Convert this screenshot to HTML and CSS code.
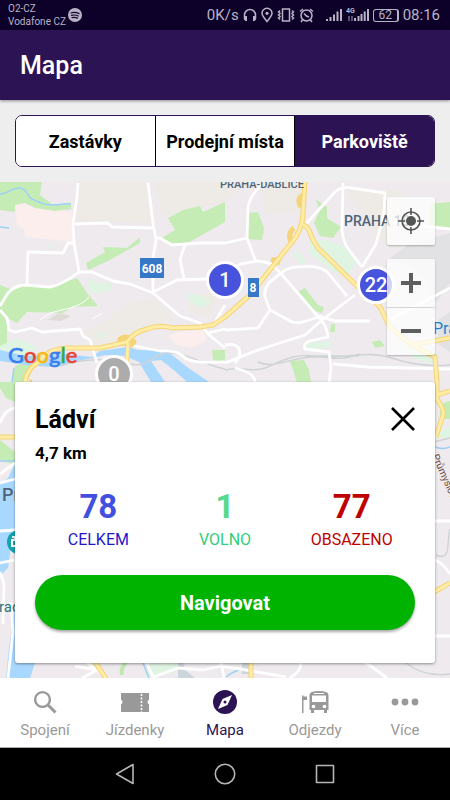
FILE: index.html
```html
<!DOCTYPE html>
<html lang="cs">

<head>
    <meta charset="UTF-8">
    <meta name="viewport" content="width=device-width, initial-scale=1.0">
    <title>Mapa</title>
    <link rel="stylesheet" href="styles.css">
</head>

<body>
    <div class="status">
        <div class="carrier">O2-CZ<br>Vodafone CZ</div>
        <svg class="spotify" width="14" height="14" viewBox="0 0 14 14">
            <circle cx="7" cy="7" r="7" fill="#b9b3c6" />
            <path d="M3 5q4-1.500 8 .6M3.500 7.400q3.500-1 6.700.6M4 9.600q3-.8 5.400.5" fill="none" stroke="#130531" stroke-width="1.200" stroke-linecap="round" />
        </svg>
        <div class="status-right">
            <span class="speed">0K/s</span>
            <svg width="14" height="16" viewBox="0 0 14 16">
                <path d="M1.500 12V8a5.500 5.500 0 0 1 11 0v4" class="line" />
                <path d="M1 9h3v5H2.500L1 12.500zM13 9h-3v5h1.500l1.500-1.500z" class="solid" />
            </svg>
            <svg width="12" height="16" viewBox="0 0 12 16">
                <path d="M6 14.500C3 11 1 8.800 1 6.300a5 5 0 0 1 10 0c0 2.500-2 4.700-5 8.200z" class="line" />
                <circle cx="6" cy="6.300" r="1.600" class="solid" />
            </svg>
            <svg width="18" height="16" viewBox="0 0 18 16">
                <path d="M5.500 2h7v12h-7zM3 3.500L1.500 5 3 6.500 1.500 8 3 9.500 1.500 11 3 12.500M15 3.500L16.500 5 15 6.500 16.500 8 15 9.500l1.500 1.500-1.500 1.500" class="line" />
            </svg>
            <svg width="15" height="16" viewBox="0 0 15 16">
                <circle cx="7.500" cy="8.500" r="5.500" class="line" />
                <path d="M1 4.500L4 2M14 4.500L11 2M3.500 13L2 15M11.500 13l1.500 2M5 6.500l2.500 2.500L10 10" class="line" />
            </svg>
            <svg class="signal" width="16" height="16" viewBox="0 0 16 16">
                <path d="M1 14v-2M4.500 14v-4M8 14V7.500M11.500 14V4.500M15 14V2" class="bar" />
            </svg>
            <svg width="23" height="16" viewBox="0 0 23 16">
                <text x="0" y="6" class="net">4G</text>
                <path d="M3 14V9M6 14V9" class="bar dim" />
                <path d="M9 14v-3M12.500 14V9M15.500 14V7M18.700 14V4.500M22 14V2" class="bar" />
            </svg>
            <span class="battery">62</span>
            <span class="clock">08:16</span>
        </div>
    </div>

    <header class="header">
        <h1>Mapa</h1>
    </header>

    <div class="filter">
        <div class="segments">
            <button type="button">Zastávky</button>
            <button type="button">Prodejní místa</button>
            <button type="button" class="selected">Parkoviště</button>
        </div>
    </div>

    <main class="map">
        <svg class="map-canvas" viewBox="0 182 450 496" preserveAspectRatio="xMidYMin slice">
            <rect x="-500" y="182" width="1500" height="1200" fill="#eeeaee" />

            <!-- built-up areas -->
            <path fill="#eeebe6" d="M78 182h68l5 42-38-2-38 0zM155 182h95l-25 20-22 6-20 2-20 8zM260 182h45l-5 30-35 2zM345 190h60l-8 60-20-10zM80 335l30-18 20-14 22-4 20 18-12 8-30 15-30 8zM188 300l22-9 8 8-10 18-20-6z" />
            <path fill="#e2e2e4" d="M390 258l18-13 42-12v50l-14 20-10-20-15-18zM438 320l12-8v40l-12-8z" />
            <path fill="#fdeeee" d="M15 205l10-2 10 5 37 4v30l-15-2-32-3-1-8-7-3zM168 336l10-4 25-2 4 10-15 8-15-3z" />
            <path fill="#dedbd7" d="M47 320l12-7 12 3-10 5zM193 304l7-7 4 1-6 8z" />

            <!-- parks -->
            <path fill="#c6ecb6" d="M0 182h42l-2 13 13 10 18-1v5l-16 2-20-3-10-5-10 2v7l-15-2zM168 218l15-8 17-4 3 6 22-10v20l-37 21h-21l-5-5 13-8zM86 263l19-11-2-5 24 1 13-11v6l-30 17-22 10zM0 285l13 5 12-4 25 1 27-9 10 15 11 13-26 1-9 6-36-1-10 11-10-5 0 25-7 4zM248 213l10-1 6 16-2 12-16-1zM315 199l12 8v11l14 9-8 11-13-2-6-13 6-13zM297 292l8-4 13 17 6 2-2 6-12-3zM430 204l20-2v26l-20-2zM372 342l8-2 5 6-10 2zM290 361l14-1 5 10 2 12h-14zM331 324h4v8h-5zM15 366l12-5 6 8-6 13H12zM212 350h13v13l-12-3zM0 382h15v20l-9-4-6-10zM0 440l15 12v13l-15-5zM0 516l3 10-3 8zM440 404l10-3v18h-10z" />
            <path fill="#e0f4e3" d="M310 238l20 3 20 8 8 10-10 16-14-3-24-18zM292 252l10 2 4 8-6 3zM187 294l16 2 8 6-8 6-14-6zM90 278l8 5 15 0-3 8-18 2-4-6zM302 344l30-3-2 6-22 5zM0 346l18-8 20 10-10 8-28-2zM400 342l35 8v14l-22-6zM145 676l6-14h30l-8 12zM436 432l14-5v10l-14 2zM97 333l6 0 2 5-8-1zM51 243l3-1-1 7h-3z" />

            <!-- water -->
            <path fill="#a9d8ff" d="M0 350l26 6 40-2 26 3 8-6 28-4 10 3 29 1 20 16 22 15h-22l-12-11-14-11-10 1 14 21h-14l-12-20-14-6-20-1-30 7-24 5-25-2-26-4zM15 464l-7 14-8 6v92l8-8 4-28 3-4zM15 608l-6 40-3 30h24l6-18H15z" />
            <g class="stream">
                <path d="M0 194c8 0 12-7 20-6s7 9 12 11 10 6 20 6 12-2 19-1" />
                <path d="M0 227l9 1M12 382l2-14M435 447q8 3 15 0M0 461h15M143 663l6 15M226 677q10-8 20-8" />
            </g>
            <path fill="#cbd5da" d="M178 662h5l2 8 10 8h-17zM242 662h8v12h-8z" />

            <!-- railways -->
            <g class="rail">
                <path d="M60 366c30-10 50-6 70-2s20-10 38-11 30 10 57 16M225 370c14-4 24 3 40-2 16-6 28-15 50-12s26 4 45-2M258 362c18 8 32-6 60-5s50-6 70 0 36 10 62 8M305 356h54" />
                <path d="M405 662c14 12 30 14 45 12M434 442l16-4M436 555c16 7 10-12 14-26" />
            </g>

            <!-- streets -->
            <g class="street">
                <path d="M78 183l-1 14-4 26 1 20 5 28M75 224l33-1 4 4 41 1M148 183l5 40 3 17-3 18v34M156 238h4l12 7 28-2h25l22-5M185 245l-5 14 4 20M27 285l1-33 35 1 5-10h5" />
                <path d="M0 306l8-13q7-8 17-8l25 2q12-2 29-15l13 0 21 9 17 3 23 9 27 23 20 7 8 11 17 14M153 292l24-12 31-1M225 305l-10 17M208 333l17-4" />
                <path d="M0 310l7 8 2 12 6 2 17-4 10 4 38-3 3 7 7 4 7 23M130 345l30 6q18-1 24 6 6 7 41 5" />
                <path d="M262 184q-14 14-14 25l-1 29 9 24M225 272l16-8 16-3q10 0 18 6l15 17 31 36q6 7 7 17l-18 4q-7 2-5 8l24 3 2 15-2 17" />
                <path d="M225 363l33-13 47-15 17-15 33-25M275 278q-12 8-10 19l5 13 22 12q8 2 20-3l10-3M275 278q12-12 24-11 22-3 30 7l18 22M270 310l-12 18-33 2M322 317l13 4h35" />
                <path d="M343 183l-1 47q1 12 7 20l13 17M303 227l32-35q7-6 17-4l33 5-1 20-8 31-14 23M385 222l65 7M391 319l59-31M225 345c16-3 18 8 10 18M235 368q20 5 20 14M333 364l35 3 82 2" />
                <path d="M0 423q5-14 15-15M0 474l15-11M0 483l15-4M0 531l15-1M0 563l15-3M0 572l4 12-1 40M8 678l5-46-2-30M435 521h15M435 560q8 3 15 14M435 636h15M75 666l22 4-15 8M86 662l16 12M147 663l6 14 25-9 25 2 18-4 25 4 40 7M221 662l3 16M301 662q0 11-12 16M365 662l22 16" />
            </g>
            <path class="park-path" d="M126 662q-6 8-4 13" />
            <path class="lane" d="M40 320l10-7 20-5q14-4 19-11M92 319l10-6" />

            <!-- main roads -->
            <g class="road-edge">
                <path d="M25 382q2-14 14-20 8-13 28-14l33 0 27-6q7-10 20-13 12-5 26-1l27-1 13-2 12-8 25-22 38-48q15-16 15-34l2-32M128 343l-1 17-5 22M29 382h3" />
                <path d="M303 225q5 0 9 13l6 10 40 39 22 20 10 20 22 18 23 12 2 25v17q8 12 6 16l-7 22M412 345l38-7M437 395l13-4M0 437h15M434 592l16-9M95 662l12 18M251 660v20" />
                <path d="M127 343q-8 1-7-4 8-5 14 3l-4 4M301 207q-5-8 2-12M291 242q-4-8 3-14M280 263q-11-4-4-3l4-2" />
            </g>
            <g class="road-fill">
                <path d="M25 382q2-14 14-20 8-13 28-14l33 0 27-6q7-10 20-13 12-5 26-1l27-1 13-2 12-8 25-22 38-48q15-16 15-34l2-32M128 343l-1 17-5 22" />
                <path d="M303 225q5 0 9 13l6 10 40 39 22 20 10 20 22 18 23 12 2 25v17q8 12 6 16l-7 22M412 345l38-7M437 395l13-4M0 437h15M434 592l16-9M95 662l12 18M251 660v20" />
            </g>

            <!-- place names and road numbers -->
            <g class="place">
                <text x="220" y="188" class="small">PRAHA-ĎÁBLICE</text>
                <text x="344" y="226">PRAHA 18</text>
                <text x="310" y="390" class="small">PRAHA 9</text>
                <text x="2" y="501" class="big">Praha</text>
            </g>
            <text x="433" y="334" class="sight">Pra</text>
            <text x="-1" y="612" class="castle">rad</text>
            <text x="432" y="456" class="street-name" transform="rotate(66 432 456)">Průmyslová</text>
            <circle cx="19" cy="542" r="12" fill="#12a4af" />
            <path d="M12 537h3v3h-3v6h3" stroke="#fff" stroke-width="2" fill="none" />
            <rect x="140" y="258" width="24" height="20" fill="#3777c8" />
            <text x="152" y="273" class="road-no">608</text>
            <rect x="248" y="278" width="11" height="19" fill="#3777c8" />
            <text x="253" y="292" class="road-no">8</text>
        </svg>

        <button type="button" class="pin pin-one">1</button>
        <button type="button" class="pin pin-many">22</button>
        <button type="button" class="pin pin-empty">0</button>
        <div class="google"><span class="b">G</span><span class="r">o</span><span class="y">o</span><span class="b">g</span><span class="g">l</span><span class="r">e</span></div>

        <div class="controls">
            <button type="button" class="control" aria-label="Moje poloha">
                <svg width="28" height="28" viewBox="0 0 28 28">
                    <circle cx="14" cy="14" r="9" fill="none" stroke="#555" stroke-width="1.600" />
                    <circle cx="14" cy="14" r="5" fill="#555" />
                    <path d="M14 1v7M14 20v7M1 14h7M20 14h7" stroke="#555" stroke-width="1.600" />
                </svg>
            </button>
            <div class="zoom">
                <button type="button" class="control" aria-label="Přiblížit">
                    <svg width="22" height="22" viewBox="0 0 22 22">
                        <path d="M11 1v20M1 11h20" stroke="#5e5e5e" stroke-width="4" />
                    </svg>
                </button>
                <button type="button" class="control" aria-label="Oddálit">
                    <svg width="22" height="22" viewBox="0 0 22 22">
                        <path d="M1 10h20" stroke="#5e5e5e" stroke-width="4" />
                    </svg>
                </button>
            </div>
        </div>

        <section class="card">
            <div class="card-head">
                <h2>Ládví</h2>
                <button type="button" class="close" aria-label="Zavřít">
                    <svg width="24" height="24" viewBox="0 0 24 24">
                        <path d="M1 1l22 22M23 1L1 23" stroke="#000" stroke-width="2.600" />
                    </svg>
                </button>
            </div>
            <p class="distance">4,7 km</p>
            <div class="stats">
                <div class="stat total"><strong>78</strong><span>CELKEM</span></div>
                <div class="stat free"><strong>1</strong><span>VOLNO</span></div>
                <div class="stat taken"><strong>77</strong><span>OBSAZENO</span></div>
            </div>
            <button type="button" class="navigate">Navigovat</button>
        </section>
    </main>

    <nav class="tabs">
        <a href="#">
            <svg width="28" height="24" viewBox="0 0 28 24">
                <circle cx="11.500" cy="9.500" r="7.400" fill="none" stroke="currentColor" stroke-width="2.400" />
                <path d="M17 15l7.500 7.500" stroke="currentColor" stroke-width="3" />
            </svg>
            Spojení
        </a>
        <a href="#">
            <svg width="28" height="24" viewBox="0 0 28 24">
                <path d="M0 3h28v6.500q-3 2.500 0 5V22H0v-7.500q3-2.500 0-5z" fill="currentColor" />
                <path d="M20.500 4v18" stroke="#fff" stroke-width="1.600" stroke-dasharray="2 1.500" />
            </svg>
            Jízdenky
        </a>
        <a href="#" class="active">
            <svg width="28" height="24" viewBox="0 0 28 24">
                <circle cx="14" cy="12" r="12" fill="currentColor" />
                <path d="M21 5l-4.500 10L7 19l4.500-10z" fill="#fff" />
                <circle cx="14" cy="12" r="1.500" fill="currentColor" />
            </svg>
            Mapa
        </a>
        <a href="#">
            <svg width="28" height="24" viewBox="0 0 28 24">
                <path d="M1 5.500h1.500V23H1zM2.500 6.500H6V10H2.500z" fill="currentColor" />
                <path d="M8.500 5q0-4 9.500-4t9.500 4v15h-1.500v3h-3v-3h-10v3h-3v-3H8.500z" fill="currentColor" />
                <path d="M11 5.500h14v6.500H11zM13 3h10v1H13z" fill="#fff" />
                <circle cx="12.500" cy="16.500" r="1.800" fill="#fff" />
                <circle cx="23.500" cy="16.500" r="1.800" fill="#fff" />
            </svg>
            Odjezdy
        </a>
        <a href="#">
            <svg width="28" height="24" viewBox="0 0 28 24">
                <g fill="currentColor">
                    <circle cx="4" cy="12" r="3.400" />
                    <circle cx="14" cy="12" r="3.400" />
                    <circle cx="24" cy="12" r="3.400" />
                </g>
            </svg>
            Více
        </a>
    </nav>

    <div class="system-nav">
        <button type="button" aria-label="Zpět">
            <svg width="22" height="22" viewBox="0 0 22 22">
                <path d="M19 1.500v19L2.500 11z" />
            </svg>
        </button>
        <button type="button" aria-label="Domů">
            <svg width="22" height="22" viewBox="0 0 22 22">
                <circle cx="11" cy="11" r="9.700" />
            </svg>
        </button>
        <button type="button" aria-label="Přehled">
            <svg width="22" height="22" viewBox="0 0 22 22">
                <path d="M2.500 2.500h17v17h-17z" />
            </svg>
        </button>
    </div>
</body>

</html>
```
FILE: styles.css
```css
* {
    box-sizing: border-box;
}

body {
    margin: 0;
    min-height: 100vh;
    display: flex;
    flex-direction: column;
    font-family: Roboto, sans-serif;
    background-color: #eee;
    color: #000;
}

button {
    font-family: inherit;
    padding: 0;
    border: none;
    cursor: pointer;
}

svg {
    display: block;
    flex-shrink: 0;
}

h1,
h2,
p {
    margin: 0;
}

/* Android status bar */
.status {
    display: flex;
    align-items: center;
    height: 30px;
    padding: 0 10px 0 8px;
    background-color: #0d0129;
    color: #b9b3c6;
}

.carrier {
    font-size: 10px;
    line-height: 13px;
}

.spotify {
    margin-left: 2px;
}

.status-right {
    display: flex;
    align-items: center;
    gap: 4px;
    margin-left: auto;
    font-size: 15px;
}

.status .line {
    fill: none;
    stroke: #b9b3c6;
    stroke-width: 1.5;
}

.status .solid {
    fill: #b9b3c6;
}

.status .bar {
    stroke: #b9b3c6;
    stroke-width: 2;
}

.status .dim {
    stroke: #5a4f70;
}

.signal {
    margin-left: 8px;
}

.net {
    font-size: 7px;
    font-weight: 700;
    fill: #b9b3c6;
}

.battery {
    width: 26px;
    border: 1px solid #b9b3c6;
    border-right-width: 2px;
    border-radius: 3px;
    font-size: 12px;
    line-height: 11px;
    text-align: center;
}

.header {
    position: relative;
    z-index: 1;
    display: flex;
    align-items: center;
    height: 70px;
    padding: 0 20px;
    background-color: #2c1353;
    color: #fff;
    box-shadow: 0 1px 3px rgba(0, 0, 0, 0.4);
}

.header h1 {
    font-size: 25px;
    font-weight: 500;
}

.filter {
    padding: 15px;
}

.segments {
    display: flex;
    height: 52px;
    border: 1px solid #2c1353;
    border-radius: 7px;
    overflow: hidden;
    background-color: #fff;
}

.segments button {
    flex: 1;
    background-color: #fff;
    color: #000;
    font-size: 18px;
    font-weight: 700;
    white-space: nowrap;
}

.segments button + button {
    border-left: 1px solid #000;
}

.segments .selected {
    background-color: #2c1353;
    color: #fff;
}

/* Map */
.map {
    position: relative;
    flex: 1;
    display: flex;
    flex-direction: column;
    padding: 15px;
    overflow: hidden;
}

.map-canvas {
    position: absolute;
    top: 0;
    left: 0;
    width: 100%;
    height: 100%;
}

.stream,
.rail,
.street,
.lane,
.park-path,
.road-edge,
.road-fill {
    fill: none;
    stroke-linejoin: round;
}

.stream {
    stroke: #9ed0f7;
    stroke-width: 1.5;
}

.rail {
    stroke: #cfd3d6;
    stroke-width: 1.4;
}

.street {
    stroke: #fff;
    stroke-width: 2.8;
}

.lane {
    stroke: #fff;
    stroke-width: 1;
}

.park-path {
    stroke: #bfe9b0;
    stroke-width: 4;
}

.road-edge {
    stroke: #f5d377;
    stroke-width: 5;
}

.road-fill {
    stroke: #ffeda6;
    stroke-width: 3;
}

.place {
    fill: #4f6478;
    font-weight: 500;
    font-size: 14px;
}

.place .small {
    font-size: 11px;
}

.place .big {
    font-size: 18px;
}

.sight {
    fill: #1b83c8;
    font-size: 16px;
}

.castle {
    fill: #2c7780;
    font-size: 15px;
}

.street-name {
    fill: #6d4a3c;
    font-size: 10px;
}

.road-no {
    fill: #fff;
    font-size: 12px;
    font-weight: 700;
    text-anchor: middle;
}

.pin {
    position: absolute;
    width: 38px;
    height: 38px;
    border: 3px solid #fff;
    border-radius: 50%;
    background-color: #4753dd;
    color: #fff;
    font-size: 20px;
    font-weight: 500;
}

.pin-one {
    top: 79px;
    left: 206px;
}

.pin-many {
    top: 84px;
    left: 357px;
}

.pin-empty {
    top: 173px;
    left: 95px;
    background-color: #acacac;
}

.google {
    position: absolute;
    top: 160px;
    left: 8px;
    font-family: Lato, sans-serif;
    font-size: 22px;
    line-height: 26px;
    font-weight: 500;
    -webkit-text-stroke: 0.5px currentColor;
}

.google .b {
    color: #3b7ded;
}

.google .r {
    color: #e94335;
}

.google .y {
    color: #f5b912;
}

.google .g {
    color: #34a853;
}

.controls {
    position: relative;
    align-self: flex-end;
    display: flex;
    flex-direction: column;
    gap: 14px;
}

.control {
    display: flex;
    align-items: center;
    justify-content: center;
    width: 48px;
    height: 48px;
    border-radius: 2px;
    background-color: rgba(255, 255, 255, 0.75);
    box-shadow: 0 1px 2px rgba(0, 0, 0, 0.25);
}

.zoom {
    border-radius: 2px;
    box-shadow: 0 1px 2px rgba(0, 0, 0, 0.25);
}

.zoom .control {
    box-shadow: none;
}

.zoom .control + .control {
    border-top: 1px solid #d5d5d5;
}

/* Parking detail */
.card {
    position: relative;
    margin-top: auto;
    padding: 20px 20px 33px;
    border-radius: 3px;
    background-color: #fff;
    box-shadow: 0 1px 3px rgba(0, 0, 0, 0.4);
}

.card-head {
    display: flex;
    align-items: center;
    justify-content: space-between;
    height: 34px;
}

.card h2 {
    font-size: 25px;
    font-weight: 700;
}

.close {
    background: none;
}

.distance {
    margin-top: 5px;
    font-size: 17px;
    line-height: 24px;
    font-weight: 700;
}

.stats {
    display: flex;
    margin: 21px 0 23px;
}

.stat {
    flex: 1;
    display: flex;
    flex-direction: column;
    align-items: center;
}

.stat strong {
    font-size: 33px;
    line-height: 41px;
    font-weight: 700;
}

.stat span {
    font-size: 16px;
    line-height: 25px;
}

.total {
    color: #1f18cf;
}

.total strong {
    color: #4350df;
}

.free {
    color: #30cf78;
}

.free strong {
    color: #56d98d;
}

.taken {
    color: #c00000;
}

.navigate {
    display: block;
    width: 100%;
    height: 55px;
    border-radius: 28px;
    background-color: #00b300;
    color: #fff;
    font-size: 20px;
    font-weight: 700;
    box-shadow: 0 2px 3px rgba(0, 0, 0, 0.35);
}

.tabs {
    display: flex;
    height: 70px;
    background-color: #fff;
    border-bottom: 1px solid #aaa;
}

.tabs a {
    flex: 1;
    display: flex;
    flex-direction: column;
    align-items: center;
    gap: 6px;
    padding-top: 12px;
    color: #999;
    font-size: 15px;
    line-height: 20px;
    text-decoration: none;
}

.tabs .active {
    color: #2c1353;
}

.system-nav {
    display: flex;
    align-items: center;
    justify-content: center;
    gap: 78px;
    height: 52px;
    background-color: #000;
}

.system-nav button {
    background: none;
}

.system-nav svg {
    fill: none;
    stroke: #b5b5b5;
    stroke-width: 1.6;
    stroke-linejoin: round;
}
```
